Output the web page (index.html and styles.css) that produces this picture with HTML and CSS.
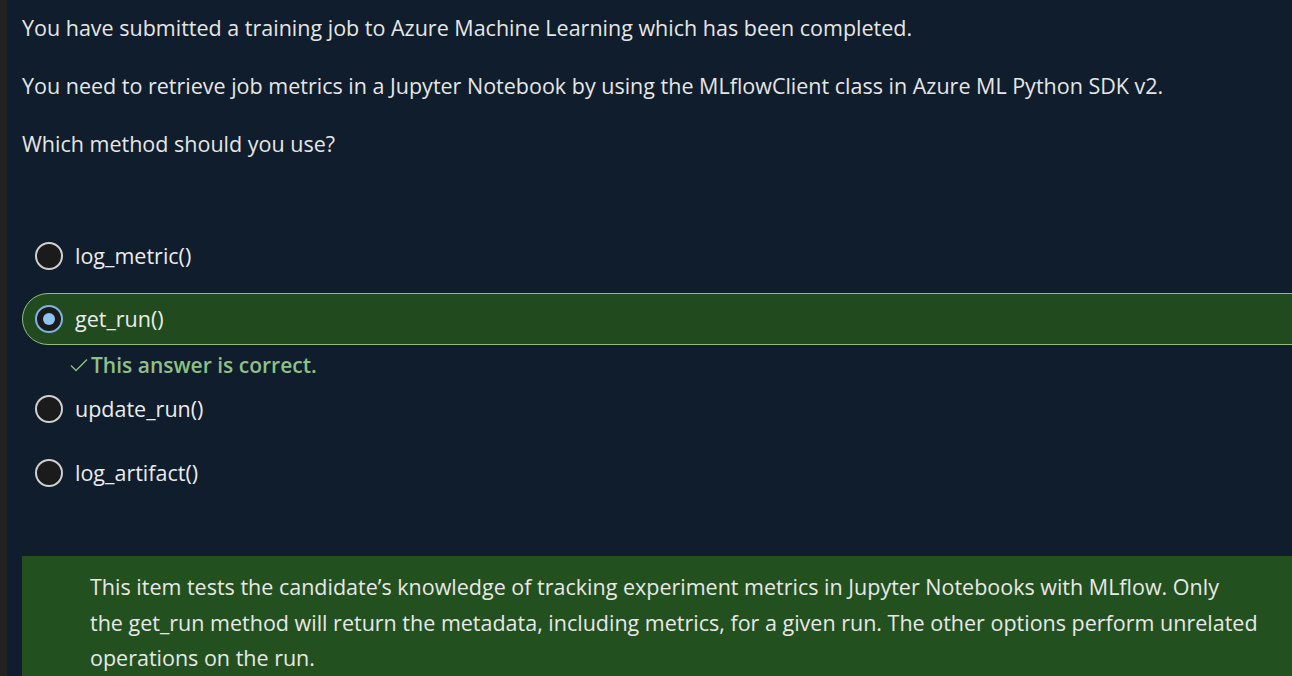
FILE: index.html
```html
<!DOCTYPE html>
<html>
<head>
<meta charset="utf-8">
<link rel="stylesheet" href="styles.css">
</head>
<body>
<div class="page">
  <div class="content">
    <p class="q">You have submitted a training job to Azure Machine Learning which has been completed.</p>
    <p class="q">You need to retrieve job metrics in a Jupyter Notebook by using the MLflowClient class in Azure ML Python SDK v2.</p>
    <p class="q">Which method should you use?</p>
    <div class="options">
      <div class="option"><span class="radio"></span><span class="label">log_metric()</span></div>
      <div class="option selected"><span class="radio checked"></span><span class="label">get_run()</span></div>
      <div class="feedback"><svg class="check" width="18" height="14" viewBox="0 0 18 14"><path d="M1 7.5 L6 12.5 L17 1.5" fill="none" stroke="#8fc084" stroke-width="1.3"/></svg><span>This answer is correct.</span></div>
      <div class="option"><span class="radio"></span><span class="label">update_run()</span></div>
      <div class="option"><span class="radio"></span><span class="label">log_artifact()</span></div>
    </div>
    <div class="explain">
      <p>This item tests the candidate’s knowledge of tracking experiment metrics in Jupyter Notebooks with MLflow. Only the&nbsp;get_run method will return the metadata, including metrics, for a given run. The other options perform unrelated operations on the run.</p>
    </div>
  </div>
</div>
</body>
</html>
```
FILE: styles.css
```css
html, body {
  margin: 0;
  padding: 0;
  height: 100%;
  overflow: hidden;
  background: #0f1d2c;
}
.page {
  height: 100%;
  border-left: 7px solid #232220;
  overflow: hidden;
  font-family: "Open Sans", "Noto Sans", sans-serif;
  color: #e6e6e6;
}
.content {
  padding: 14px 0 0 15px;
}
.q {
  margin: 0 0 30px 0;
  font-size: 21.5px;
  line-height: 28px;
  white-space: nowrap;
}
.options {
  margin-top: 72px;
  display: flex;
  flex-direction: column;
  margin-right: -60px;
}
.option {
  display: flex;
  align-items: center;
  height: 52px;
  box-sizing: border-box;
  padding-left: 12px;
  border: 1px solid transparent;
  border-radius: 26px;
  margin-bottom: 12px;
}
.option.selected {
  background: #214b1f;
  border-color: #8fbf7f;
  margin-top: -1px;
  margin-bottom: 6px;
}
.radio {
  width: 28px;
  height: 28px;
  box-sizing: border-box;
  border-radius: 50%;
  border: 2px solid #cfcfcf;
  background: #1b1b1b;
  margin-right: 12px;
  flex: none;
  position: relative;
}
.radio.checked {
  border-color: #7fb2e5;
}
.radio.checked::after {
  content: "";
  position: absolute;
  left: 6px;
  top: 6px;
  width: 12px;
  height: 12px;
  border-radius: 50%;
  background: #8ec3f2;
}
.label {
  font-size: 21.5px;
  line-height: 28px;
  color: #ececec;
}
.feedback {
  display: flex;
  align-items: center;
  height: 28px;
  padding-left: 48px;
  margin-bottom: 4px;
  color: #8fc084;
  font-size: 21px;
  font-weight: 600;
}
.check {
  margin-right: 3px;
}
.explain {
  margin-top: 45px;
  margin-right: -60px;
  background: #22501f;
  padding: 13px 88px 20px 68px;
}
.explain p {
  margin: 0;
  font-size: 21.5px;
  line-height: 35.5px;
  color: #e8e8e8;
}
```
